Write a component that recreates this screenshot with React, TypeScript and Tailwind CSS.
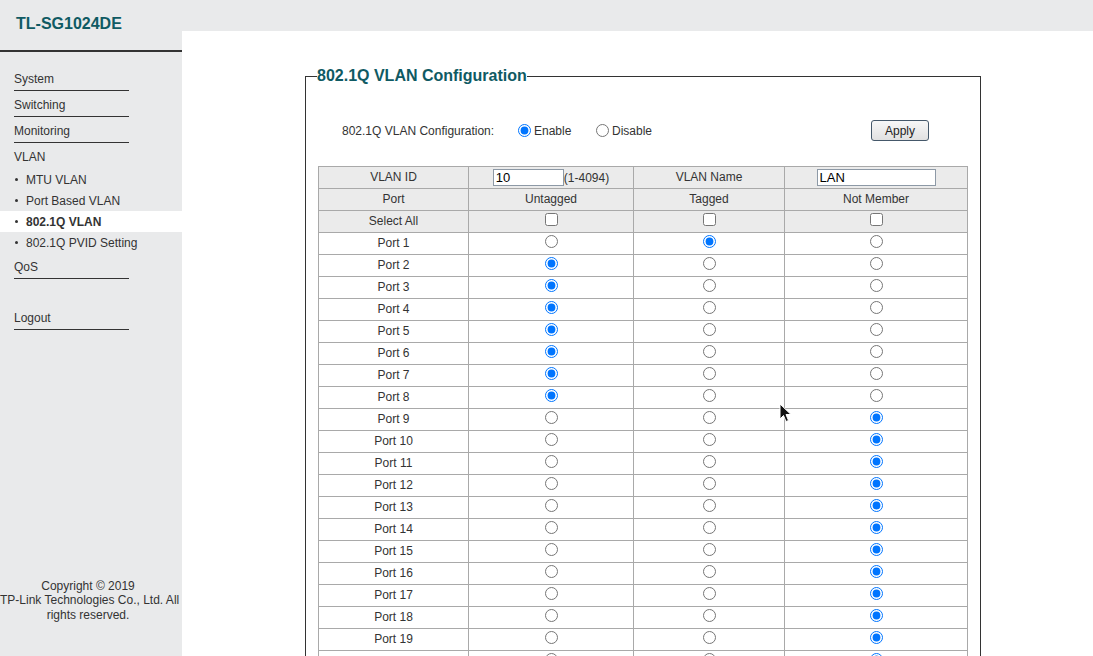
import React from 'react';

const FONT = { fontFamily: '"Liberation Sans", Arial, sans-serif' };

const MENU_TOP = ['System', 'Switching', 'Monitoring'];
const VLAN_SUB = ['MTU VLAN', 'Port Based VLAN', '802.1Q VLAN', '802.1Q PVID Setting'];

// 0 = untagged, 1 = tagged, 2 = not member
const PORTS = Array.from({ length: 24 }, (_, i) => {
  const n = i + 1;
  const mode = n === 1 ? 1 : n <= 8 ? 0 : 2;
  return { n, mode };
});

function MenuItem({ label, underline = true }: { label: string; underline?: boolean }) {
  return (
    <div
      className={`ml-[14px] w-[115px] h-[26px] pt-[7px] leading-[14px] ${
        underline ? 'border-b border-[#333]' : ''
      }`}
    >
      {label}
    </div>
  );
}

function SubItem({ label, active }: { label: string; active?: boolean }) {
  return (
    <div className={`flex items-center h-[21px] leading-[20px] ${active ? 'bg-white font-bold' : ''}`}>
      <div className="w-[3px] h-[3px] rounded-full bg-[#333] ml-[15px] mr-[8px]" />
      <span>{label}</span>
    </div>
  );
}

function Sidebar() {
  return (
    <div className="w-[182px] h-full flex flex-col text-[12px] text-[#333] shrink-0">
      {/* Model name */}
      <div className="h-[50px] pl-[16px] pt-[15px] text-[16px] leading-[18px] font-bold text-[#0f5a63]">
        TL-SG1024DE
      </div>
      <div className="h-[2px] bg-[#333]" />

      {/* Menu */}
      <div className="mt-[13px]">
        {MENU_TOP.map((m) => (
          <MenuItem key={m} label={m} />
        ))}
        <MenuItem label="VLAN" underline={false} />
        {VLAN_SUB.map((s) => (
          <SubItem key={s} label={s} active={s === '802.1Q VLAN'} />
        ))}
        <MenuItem label="QoS" />
        <div className="mt-[25px]">
          <MenuItem label="Logout" />
        </div>
      </div>

      {/* Copyright */}
      <div className="mt-auto mb-[34px] w-[176px] text-center leading-[14.5px] whitespace-nowrap">
        <div>Copyright © 2019</div>
        <div>TP-Link Technologies Co., Ltd. All</div>
        <div>rights reserved.</div>
      </div>
    </div>
  );
}

function Radio({ checked, name }: { checked?: boolean; name: string }) {
  return (
    <input
      type="radio"
      name={name}
      defaultChecked={checked}
      className="w-[13px] h-[13px] m-0 align-baseline"
    />
  );
}

function VlanTable() {
  const head = 'bg-[#ebebeb]';
  const cell = 'border border-[#a9a9a9] h-[22px] p-0 pb-px text-center align-middle';
  return (
    <table className="table-fixed border-collapse w-[649px] text-[12px] text-[#333] leading-[14px]">
      <colgroup>
        <col className="w-[150px]" />
        <col className="w-[165px]" />
        <col className="w-[151px]" />
        <col className="w-[183px]" />
      </colgroup>
      <tbody>
        <tr className={head}>
          <td className={cell}>VLAN ID</td>
          <td className={cell}>
            <input
              type="text"
              defaultValue="10"
              className="w-[71px] h-[17px] border border-[#8d99a6] bg-white px-[2px] text-[13px] leading-[15px] align-middle text-black"
            />
            <span className="align-middle">(1-4094)</span>
          </td>
          <td className={cell}>VLAN Name</td>
          <td className={cell}>
            <input
              type="text"
              defaultValue="LAN"
              className="w-[119px] h-[17px] border border-[#8d99a6] bg-white px-[2px] text-[13px] leading-[15px] align-middle text-black"
            />
          </td>
        </tr>
        <tr className={head}>
          <td className={cell}>Port</td>
          <td className={cell}>Untagged</td>
          <td className={cell}>Tagged</td>
          <td className={cell}>Not Member</td>
        </tr>
        <tr className={head}>
          <td className={cell}>Select All</td>
          {[0, 1, 2].map((c) => (
            <td key={c} className={cell}>
              <input type="checkbox" className="w-[13px] h-[13px] m-0 align-baseline" />
            </td>
          ))}
        </tr>
        {PORTS.map((p) => (
          <tr key={p.n} className="bg-white">
            <td className={cell}>Port {p.n}</td>
            {[0, 1, 2].map((c) => (
              <td key={c} className={cell}>
                <Radio name={`port-${p.n}`} checked={p.mode === c} />
              </td>
            ))}
          </tr>
        ))}
      </tbody>
    </table>
  );
}

function Cursor() {
  return (
    <svg
      className="absolute left-[597px] top-[372px]"
      width="13"
      height="20"
      viewBox="0 0 13 20"
    >
      <path
        d="M1 1 L1 16 L4.5 12.5 L7 18.5 L9.5 17.5 L7 11.5 L12 11.5 Z"
        fill="#111"
        stroke="#fff"
        strokeWidth="1"
        strokeLinejoin="round"
      />
    </svg>
  );
}

export default function App() {
  return (
    <div className="w-full h-screen overflow-hidden flex bg-[#e9eaeb]" style={FONT}>
      <Sidebar />
      <div className="flex-1 flex flex-col min-w-0">
        <div className="h-[31px] shrink-0" />
        <div className="flex-1 bg-white relative overflow-hidden">
          <fieldset className="ml-[123px] mt-[36px] w-[676px] border border-[#333] pl-[12px] pr-[12px] pb-[20px]">
            <legend className="-ml-px px-0 text-[16px] leading-[18px] font-bold text-[#0f5a63]">
              802.1Q VLAN Configuration
            </legend>

            {/* Enable / Disable row */}
            <div className="mt-[35px] flex items-center h-[21px] text-[12px] text-[#333]">
              <span className="ml-[24px] w-[176px]">802.1Q VLAN Configuration:</span>
              <label className="flex items-center w-[78px]">
                <Radio name="cfg" checked />
                <span className="ml-[3px]">Enable</span>
              </label>
              <label className="flex items-center">
                <Radio name="cfg" />
                <span className="ml-[3px]">Disable</span>
              </label>
              <button className="ml-auto mr-[39px] w-[58px] h-[21px] rounded-[3px] border border-[#45586a] bg-gradient-to-b from-[#f7f7f7] to-[#e1e1e1] text-[12px] text-[#222]">
                Apply
              </button>
            </div>

            <div className="mt-[25px]">
              <VlanTable />
            </div>
          </fieldset>
          <Cursor />
        </div>
      </div>
    </div>
  );
}
